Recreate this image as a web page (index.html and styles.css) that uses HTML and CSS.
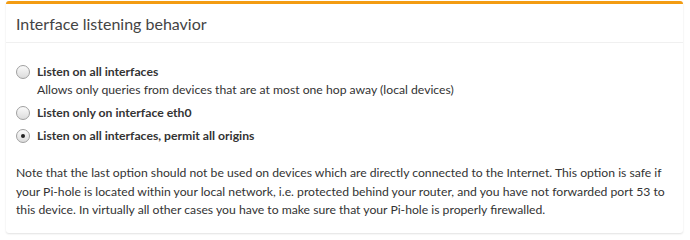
FILE: index.html
```html
<html>

<head>
	<title>
		Interface settings
	</title>

	<link rel="stylesheet" href="styles.css">
</head>

<body>
	<div class="box">
		<div class="box-header">
			<h3 class="box-title">Interface listening behavior</h3>
		</div>
		<div class="box-body">
			<div class="radio">
				<span class="radio-dot"></span>
				<div class="radio-text">
					<strong>Listen on all interfaces</strong>
					<div class="radio-help">Allows only queries from devices that are at most one hop away (local devices)</div>
				</div>
			</div>
			<div class="radio">
				<span class="radio-dot"></span>
				<div class="radio-text">
					<strong>Listen only on interface eth0</strong>
				</div>
			</div>
			<div class="radio">
				<span class="radio-dot checked"></span>
				<div class="radio-text">
					<strong>Listen on all interfaces, permit all origins</strong>
				</div>
			</div>
			<p class="note">
				Note that the last option should not be used on devices which are directly connected to the Internet. This option is safe if your Pi-hole is located within your local network, i.e. protected behind your router, and you have not forwarded port 53 to this device. In virtually all other cases you have to make sure that your Pi-hole is properly firewalled.
			</p>
		</div>
	</div>
</body>

</html>
```

FILE: styles.css
```css
html,
body {
	margin: 0px;
	padding: 0px;
	background-color: #fff;
	font-family: Lato, "Liberation Sans", sans-serif;
	font-size: 12.2px;
	color: #333;
}

.box {
	margin: 1px 7px 0px 6px;
	border-top: 3px solid #f39c12;
	border-radius: 3px;
	background-color: #fff;
	box-shadow: 0px 1px 2px rgba(0, 0, 0, 0.12);
}

.box-header {
	height: 38px;
	padding: 0px 10px;
	display: flex;
	align-items: center;
	border-bottom: 1px solid #f0f0f0;
}

.box-title {
	margin: 0px;
	font-size: 16px;
	font-weight: normal;
	color: #444;
}

.box-body {
	padding: 20px 10px 10px 10px;
}

.radio {
	display: flex;
	align-items: flex-start;
	gap: 7px;
	margin-bottom: 5px;
}

.radio-dot {
	flex: none;
	position: relative;
	width: 12px;
	height: 12px;
	margin-top: 2px;
	border: 1px solid #a0a0a0;
	border-radius: 100%;
	background: linear-gradient(#fafafa, #dcdcdc);
}

.radio-dot.checked::after {
	content: "";
	position: absolute;
	left: 4px;
	top: 4px;
	width: 4px;
	height: 4px;
	border-radius: 100%;
	background-color: #222;
}

.radio-text strong {
	display: block;
	line-height: 18px;
}

.radio-help {
	margin-top: 0px;
	line-height: 18px;
}

.note {
	margin: 19px 0px 3px 0px;
	line-height: 18.5px;
}
```
